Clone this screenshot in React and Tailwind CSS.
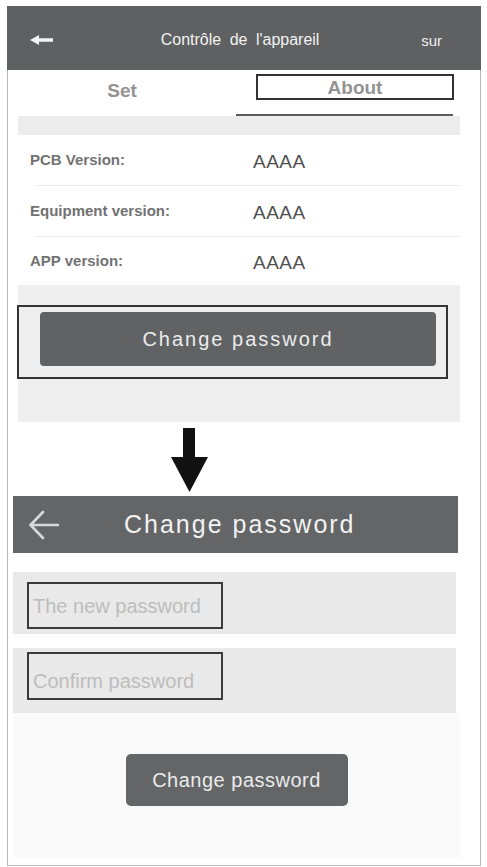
import React from "react";

const font = { fontFamily: '"Liberation Sans", Arial, sans-serif' };

function BoldBackArrow() {
  return (
    <svg width="23" height="10" viewBox="0 0 23 10" className="block">
      <polygon points="0,5 9,0 9,3.2 23,3.2 23,6.8 9,6.8 9,10" fill="#f4f4f4" />
    </svg>
  );
}

function ThinBackArrow() {
  return (
    <svg width="30" height="32" viewBox="0 0 30 32" className="block">
      <path
        d="M29 16 H2 M14 3 L1.5 16 L14 29"
        fill="none"
        stroke="#d9d9d9"
        strokeWidth="2.6"
        strokeLinecap="round"
        strokeLinejoin="round"
      />
    </svg>
  );
}

function DownArrow() {
  return (
    <svg width="37" height="64" viewBox="0 0 37 64" className="block">
      <rect x="12" y="0" width="12" height="31" fill="#111" />
      <polygon points="0,29 37,29 18.5,64" fill="#111" />
    </svg>
  );
}

const rows = [
  { label: "PCB Version:", value: "AAAA", h: "h-[51px]" },
  { label: "Equipment version:", value: "AAAA", h: "h-[51px]" },
  { label: "APP version:", value: "AAAA", h: "h-[48px]" },
];

export default function App() {
  return (
    <div className="w-[487px] h-[867px] bg-white overflow-hidden" style={font}>
      <div className="pt-[6px] pl-[7px] w-[481px]">
        {/* device control header */}
        <div className="h-[64px] bg-[#5e6062] flex items-center pl-[23px] pr-[39px] pt-[3px]">
          <BoldBackArrow />
          <div className="flex-1 text-center ml-[6px] text-[16px] text-[#f2f2f2] [word-spacing:4px]">
            Contrôle de l'appareil
          </div>
          <div className="text-[15px] text-[#f0f0f0] pt-[3px]">sur</div>
        </div>

        <div className="border-x border-b border-[#b8b8b8]">
          {/* tabs */}
          <div className="flex h-[46px]">
            <div className="w-[228px] flex items-center justify-center pb-[6px] text-[19px] leading-none font-bold text-[#939393]">
              Set
            </div>
            <div className="w-[217px] border-b-2 border-[#5a5a5a]">
              <div className="ml-[20px] mt-[4px] w-[198px] h-[26px] border-2 border-[#333] flex items-center justify-center text-[19px] leading-none font-bold text-[#939393]">
                About
              </div>
            </div>
          </div>

          <div className="ml-[10px] w-[442px] h-[19px] bg-[#ececec]" />

          {/* version info */}
          <div className="ml-[10px] w-[442px]">
            {rows.map((r, i) => (
              <div key={r.label} className={`${r.h} flex flex-col`}>
                <div className="flex-1 flex items-center pl-[12px]">
                  <div className="w-[223px] text-[15px] font-bold text-[#727272]">{r.label}</div>
                  <div className="pt-[4px] text-[19px] text-[#505050] tracking-[0.5px]">{r.value}</div>
                </div>
                {i < rows.length - 1 && <div className="ml-[17px] h-px bg-[#ebebeb]" />}
              </div>
            ))}
          </div>

          {/* change password entry */}
          <div className="ml-[10px] w-[442px] h-[137px] bg-[#efefef] pt-[20px]">
            <div className="-ml-[1px] w-[431px] h-[74px] border-2 border-[#343434] pt-[5px] pl-[21px]">
              <div className="w-[396px] h-[54px] rounded-[4px] bg-[#606264] flex items-center justify-center text-[20px] tracking-[2px] text-[#ececec]">
                Change password
              </div>
            </div>
          </div>

          <div className="h-[74px] pl-[163px] pt-[6px]">
            <DownArrow />
          </div>

          {/* change password screen */}
          <div className="ml-[5px] w-[445px] h-[57px] bg-[#636567] flex items-center pl-[16px]">
            <ThinBackArrow />
            <div className="ml-[65px] text-[25px] tracking-[2px] text-[#f2f2f2]">Change password</div>
          </div>

          <div className="h-[19px]" />

          <div className="ml-[5px] w-[443px] h-[62px] bg-[#e9e9e9] pt-[10px] pl-[14px]">
            <div className="w-[196px] h-[47px] border-2 border-[#3a3a3a] flex items-center pl-[4px] text-[20px] text-[#bdbdbd]">
              The new password
            </div>
          </div>

          <div className="h-[14px]" />

          <div className="ml-[5px] w-[443px] h-[65px] bg-[#e9e9e9] pt-[4px] pl-[14px]">
            <div className="w-[196px] h-[48px] border-2 border-[#3a3a3a] flex items-end pb-[2px] pl-[4px] text-[20px] text-[#bdbdbd]">
              Confirm password
            </div>
          </div>

          <div className="ml-[5px] w-[447px] h-[145px] bg-[#fafafa] pt-[41px] flex justify-center">
            <div className="w-[222px] h-[52px] rounded-[5px] bg-[#636567] flex items-center justify-center text-[20px] tracking-[0.5px] text-[#ebebeb]">
              Change password
            </div>
          </div>

          <div className="h-[7px]" />
        </div>
      </div>
    </div>
  );
}
